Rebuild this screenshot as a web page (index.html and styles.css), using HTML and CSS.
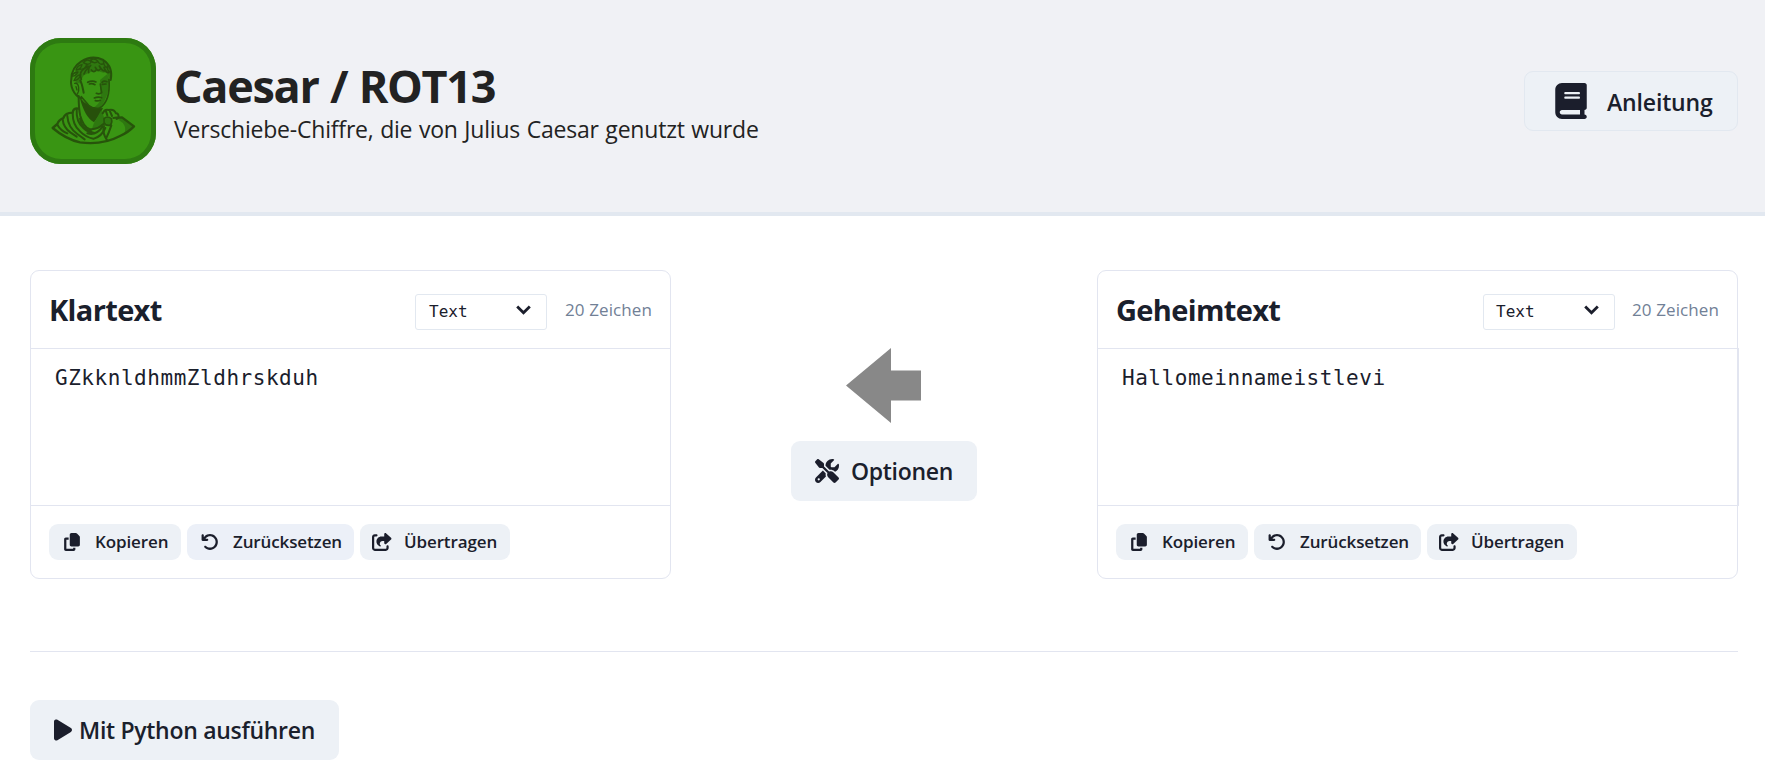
FILE: index.html
```html
<!DOCTYPE html>
<html lang="de">
<head>
<meta charset="utf-8">
<title>Caesar / ROT13</title>
<link rel="stylesheet" href="styles.css">
</head>
<body>
<svg class="defs" aria-hidden="true">
  <symbol id="i-copy" viewBox="0 0 448 512"><path d="M208 0H332.1c12.7 0 24.9 5.1 33.9 14.1l67.9 67.9c9 9 14.1 21.2 14.1 33.9V336c0 26.5-21.5 48-48 48H208c-26.5 0-48-21.5-48-48V48c0-26.5 21.5-48 48-48zM48 128h80v64H64V448H256V416h64v48c0 26.5-21.5 48-48 48H48c-26.5 0-48-21.5-48-48V176c0-26.5 21.5-48 48-48z"/></symbol>
  <symbol id="i-undo" viewBox="0 0 512 512"><path d="M125.7 160H176c17.7 0 32 14.3 32 32s-14.3 32-32 32H48c-17.7 0-32-14.3-32-32V64c0-17.7 14.3-32 32-32s32 14.3 32 32v51.2L97.6 97.6c87.5-87.5 229.3-87.5 316.8 0s87.5 229.3 0 316.8s-229.3 87.5-316.8 0c-12.5-12.5-12.5-32.8 0-45.3s32.8-12.5 45.3 0c62.5 62.5 163.8 62.5 226.3 0s62.5-163.8 0-226.3s-163.8-62.5-226.3 0L125.7 160z"/></symbol>
  <symbol id="i-share" viewBox="0 0 576 512"><path d="M352 224H305.5c-45 0-81.5 36.5-81.5 81.5c0 22.3 10.3 34.3 19.2 40.5c6.8 4.7 12.8 12 12.8 20.3c0 9.8-8 17.8-17.8 17.8h-2.5c-2.4 0-4.8-.4-7.1-1.4C210.8 374.8 128 333.4 128 240c0-79.5 64.5-144 144-144h80V34.7C352 15.5 367.5 0 386.7 0c8.6 0 16.8 3.2 23.2 8.900L548.1 133.3c7.600 6.800 11.900 16.500 11.900 26.700s-4.300 19.900-11.900 26.700l-139 125.100c-5.900 5.300-13.500 8.200-21.400 8.200H384c-17.700 0-32-14.300-32-32V224zM80 96c-8.800 0-16 7.200-16 16V432c0 8.800 7.200 16 16 16H400c8.800 0 16-7.200 16-16V384c0-17.700 14.300-32 32-32s32 14.300 32 32v48c0 44.200-35.800 80-80 80H80c-44.200 0-80-35.800-80-80V112C0 67.800 35.800 32 80 32h48c17.700 0 32 14.300 32 32s-14.300 32-32 32H80z"/></symbol>
</svg>

<header class="page-header">
  <div class="logo">
    <svg viewBox="30 24 378 378" fill="none" stroke="#27540b" stroke-width="8" stroke-linecap="round" stroke-linejoin="round">
      <path d="M168 160 Q156 120 186 96 Q218 78 250 92 Q276 108 274 146 L266 144 Q262 124 250 128 Q220 118 200 132 Q184 136 184 160Z" fill="#2f7810" stroke="none"/>
      <path d="M240 150 L262 132 L267 150 Q268 200 240 234 L222 246 L214 238 Q240 222 243 205Z" fill="#2e7810" stroke="none"/>
      <path d="M179 202 Q205 238 249 234 L240 252 L222 277 Q194 262 179 202Z" fill="#27500b" stroke="none"/>
      <path d="M222 279 L244 240 L252 262 L246 290 Q230 298 216 296Z" fill="#2e7810" stroke="none"/>
      <path d="M304 262 L341 290 L314 310 Q322 284 296 270Z" fill="#2e7810" stroke="none"/>
      <path d="M176 198 C176 225 178 246 181 258 Q190 290 208 297 Q232 300 250 282" stroke-width="6"/>
      <path d="M267 148 C270 190 262 220 239 234 Q222 242 206 226 L184 200" stroke-width="5"/>
      <path d="M181 152 C186 160 188 174 191 188 M183 205 C160 196 150 166 154 148 C154 120 168 104 184 94 Q216 74 250 90 Q280 110 272 150" stroke-width="6"/>
      <path d="M164 160 Q174 158 176 172 Q178 184 172 192 M168 170 L171 180" stroke-width="4"/>
      <path d="M184 148 Q176 128 190 118 L204 108 M192 132 Q196 120 206 112 M206 128 Q204 114 212 106 M214 120 Q222 130 228 120 M226 112 Q234 126 240 118 M238 108 Q248 126 256 122 M252 112 Q258 128 266 128" stroke-width="5"/>
      <path d="M156 138 Q166 140 174 126 Q162 126 156 138 M162 152 Q178 150 182 134 Q168 136 162 152 M168 120 Q182 120 186 104 Q172 106 168 120 M180 118 Q196 118 200 104 M190 98 Q206 108 214 96 Q202 84 190 98 M212 90 Q222 104 234 94 Q224 82 212 90 M232 92 Q240 108 252 100 M250 94 Q252 112 264 114 M262 108 Q260 122 272 128" stroke-width="4"/>
      <path d="M203 157 Q216 150 228 156 M208 162 Q216 159 225 164 M246 157 Q252 151 261 155 M247 163 L258 162" stroke-width="5"/>
      <path d="M241 162 Q243 178 245 188 Q238 194 229 190 M223 204 Q234 199 245 203 M226 212 Q234 214 241 211" stroke-width="5"/>
      <path d="M176 236 Q160 232 158 248 Q136 248 130 264 Q116 270 112 282 L98 294 Q138 328 180 337 Q248 346 300 318 Q326 306 342 289 L306 262 Q298 262 290 266" stroke-width="7"/>
      <path d="M170 238 Q168 276 190 294 Q204 308 222 308 M158 250 Q158 286 180 304 Q198 322 220 326 M142 258 Q144 292 172 312 L194 328 M128 268 Q130 292 152 308 L170 320 M112 284 Q122 302 142 310 M180 266 Q186 298 214 304 M248 290 Q228 318 202 310 M256 294 Q246 318 222 326" stroke-width="6"/>
      <path d="M252 266 Q262 256 274 266 Q278 278 270 286 Q256 288 252 278Z" fill="#2e7810" stroke-width="5"/>
      <path d="M248 250 Q254 236 266 240 Q282 236 288 250 Q296 250 296 262 L280 264 M258 244 L262 256 M270 244 L276 258 M252 288 Q246 310 262 332 M274 286 Q266 310 258 326" stroke-width="6"/>
    </svg>
  </div>
  <div class="heading">
    <h1>Caesar / ROT13</h1>
    <p>Verschiebe-Chiffre, die von Julius Caesar genutzt wurde</p>
  </div>
  <button class="btn btn-guide">
    <svg viewBox="0 0 448 512"><path d="M96 0C43 0 0 43 0 96V416c0 53 43 96 96 96H384h32c17.7 0 32-14.3 32-32s-14.3-32-32-32V384c17.7 0 32-14.3 32-32V32c0-17.7-14.3-32-32-32H384 96zm0 384H352v64H96c-17.7 0-32-14.3-32-32s14.3-32 32-32zm32-240c0-8.8 7.2-16 16-16H336c8.8 0 16 7.2 16 16s-7.2 16-16 16H144c-8.8 0-16-7.2-16-16zm16 48H336c8.8 0 16 7.2 16 16s-7.2 16-16 16H144c-8.8 0-16-7.2-16-16s7.2-16 16-16z"/></svg>
    <span>Anleitung</span>
  </button>
</header>

<main>
  <div class="converter">
    <section class="card">
      <div class="card-head">
        <h2>Klartext</h2>
        <div class="select"><span>Text</span><svg viewBox="0 0 15 10"><path d="M1.200 1.500 7.500 7.800l6.300-6.300"/></svg></div>
        <span class="count">20 Zeichen</span>
      </div>
      <div class="text">GZkknldhmmZldhrskduh</div>
      <div class="actions">
        <button class="small copy"><svg><use href="#i-copy"/></svg><span>Kopieren</span></button>
        <button class="small undo hover"><svg><use href="#i-undo"/></svg><span>Zurücksetzen</span></button>
        <button class="small share"><svg><use href="#i-share"/></svg><span>Übertragen</span></button>
      </div>
    </section>

    <div class="middle">
      <svg class="arrow" viewBox="0 0 75 75"><path d="M0 37.500 45 0V22.500H75V52.500H45V75Z"/></svg>
      <button class="btn btn-options">
        <svg viewBox="0 0 512 512"><path d="M78.600 5C69.100-2.400 55.600-1.500 47 7L7 47c-8.500 8.500-9.400 22-2.100 31.600l80 104c4.500 5.900 11.600 9.400 19 9.400h54.100l109 109c-14.700 29-10 65.400 14.300 89.600l112 112c12.500 12.500 32.800 12.500 45.300 0l64-64c12.500-12.500 12.500-32.800 0-45.300l-112-112c-24.200-24.200-60.600-29-89.600-14.300l-109-109V104c0-7.500-3.500-14.500-9.400-19L78.600 5zM19.900 396.100C7.200 408.800 0 426.100 0 444.100C0 481.600 30.400 512 67.900 512c18 0 35.300-7.200 48-19.900L233.700 374.300c-7.800-20.900-9-43.600-3.600-65.100l-61.700-61.700L19.900 396.100zM512 144c0-10.500-1.100-20.700-3.200-30.500c-2.400-11.200-16.100-14.100-24.200-6l-63.900 63.900c-3 3-7.100 4.700-11.300 4.700H352c-8.800 0-16-7.200-16-16V102.600c0-4.200 1.700-8.300 4.700-11.300l63.900-63.900c8.100-8.100 5.200-21.800-6-24.200C388.700 1.100 378.500 0 368 0C288.500 0 224 64.500 224 144l0 .8 85.300 85.300c36-9.100 75.800 .5 104 28.700L429 274.500c49-23 83-72.800 83-130.500zM56 432a24 24 0 1 1 48 0 24 24 0 1 1 -48 0z"/></svg>
        <span>Optionen</span>
      </button>
    </div>

    <section class="card card-secret">
      <div class="card-head">
        <h2>Geheimtext</h2>
        <div class="select"><span>Text</span><svg viewBox="0 0 15 10"><path d="M1.200 1.500 7.500 7.800l6.300-6.300"/></svg></div>
        <span class="count">20 Zeichen</span>
      </div>
      <div class="text">Hallomeinnameistlevi</div>
      <div class="actions">
        <button class="small copy"><svg><use href="#i-copy"/></svg><span>Kopieren</span></button>
        <button class="small undo"><svg><use href="#i-undo"/></svg><span>Zurücksetzen</span></button>
        <button class="small share"><svg><use href="#i-share"/></svg><span>Übertragen</span></button>
      </div>
    </section>
  </div>

  <hr>

  <button class="btn btn-python">
    <svg viewBox="0 0 384 512"><path d="M73 39c-14.800-9.100-33.400-9.400-48.500-.9S0 62.600 0 80V432c0 17.400 9.400 33.400 24.500 41.900s33.700 8.100 48.500-.9L361 297c14.300-8.700 23-24.200 23-41s-8.700-32.200-23-41L73 39z"/></svg>
    <span>Mit Python ausführen</span>
  </button>
</main>
</body>
</html>
```
FILE: styles.css
```css
* { box-sizing: border-box; }

body {
  margin: 0;
  height: 769px;
  overflow: hidden;
  background: #fff;
  color: #1a202c;
  font-family: "Open Sans", "Noto Sans", sans-serif;
  white-space: nowrap;
}

h1, h2, p { margin: 0; }
svg { display: block; flex: none; fill: #1b1e2c; }
.defs { position: absolute; width: 0; height: 0; }

.page-header {
  display: flex;
  align-items: flex-start;
  height: 216px;
  padding: 38px 27px 0 30px;
  background: #f0f1f5;
  border-bottom: 4px solid #e2e8f0;
}

.logo {
  width: 126px;
  height: 126px;
  overflow: hidden;
  border-radius: 31px;
  background: #399513;
  box-shadow: inset 0 0 0 5px #2d7a11;
}
.logo svg { width: 126px; height: 126px; fill: none; }

.heading { margin: 21px 0 0 18px; flex: 1; color: #222; }
h1 { font-size: 45px; line-height: 54px; font-weight: 700; letter-spacing: -1.3px; word-spacing: 1px; }
.heading p { font-size: 23px; line-height: 32px; letter-spacing: -0.2px; word-spacing: 0.8px; }

button {
  display: flex;
  align-items: center;
  padding: 0;
  border: 0;
  background: #edf1f6;
  color: #1a202c;
  font-family: inherit;
  font-weight: 600;
  text-align: left;
  white-space: nowrap;
}

.btn { height: 60px; border-radius: 9px; font-size: 23px; letter-spacing: -0.3px; }
.btn-guide { width: 214px; margin-top: 33px; padding-left: 30px; gap: 20px; border: 1px solid #e2e8f0; letter-spacing: -0.15px; }
.btn-guide span { padding-top: 2px; }
.btn-guide svg { width: 32px; height: 36px; margin-top: -1px; }

main { padding: 54px 27px 0 30px; }

.converter { display: flex; justify-content: space-between; }

.card {
  width: 641px;
  height: 309px;
  border: 1px solid #e2e5f0;
  border-radius: 9px;
}
.card-head { display: flex; align-items: center; height: 77px; padding: 0 19px 0 18px; }
.card-head h2 { flex: 1; font-size: 29px; line-height: 40px; letter-spacing: -0.65px; }

.select {
  display: flex;
  align-items: center;
  justify-content: space-between;
  width: 132px;
  height: 36px;
  margin-top: 5px;
  padding: 0 15px 0 13px;
  border: 1px solid #e2e8f0;
  border-radius: 3px;
  font: 16px "DejaVu Sans Mono", monospace;
}
.select span { margin-top: -2px; }
.select svg { width: 15px; height: 10px; margin-top: -5px; fill: none; stroke: #1b1e2c; stroke-width: 2.8; }
.count { width: 86px; margin-left: 18px; color: #718096; font-size: 17px; letter-spacing: 0.1px; }
.card-secret .select { margin-right: -1px; padding-left: 12px; }

.text {
  height: 158px;
  padding: 14px 23px 14px 24px;
  border: solid #e2e5f0;
  border-width: 1px 0;
  font: 21px/30px "DejaVu Sans Mono", monospace;
  letter-spacing: 0.54px;
}
.card-secret .text { margin-right: -2px; border-right-width: 1px; }

.actions { display: flex; gap: 6px; padding: 18px 0 0 18px; }
.small { height: 36px; border-radius: 9px; font-size: 17px; letter-spacing: -0.12px; }
.small span { margin-top: -2px; }
.small.hover { background: #ecf0f8; }
.copy { width: 132px; padding-left: 15px; gap: 15px; }
.copy svg { width: 16px; height: 18px; }
.undo { width: 167px; padding-left: 14px; gap: 14px; }
.undo svg { width: 18px; height: 18px; }
.share { width: 150px; padding-left: 12px; gap: 12px; }
.share svg { width: 20px; height: 18px; }

.middle { display: flex; flex-direction: column; align-items: center; padding-top: 78px; }
.arrow { width: 75px; height: 75px; margin-right: 1px; fill: #888; }
.btn-options { width: 186px; margin-top: 18px; padding-left: 24px; gap: 12px; }
.btn-options svg { width: 24px; height: 24px; }

hr { height: 1px; margin: 72px 0 48px; border: 0; background: #e2e5f0; }

.btn-python { width: 309px; padding-left: 24px; gap: 7px; }
.btn-python svg { width: 18px; height: 24px; }
```
